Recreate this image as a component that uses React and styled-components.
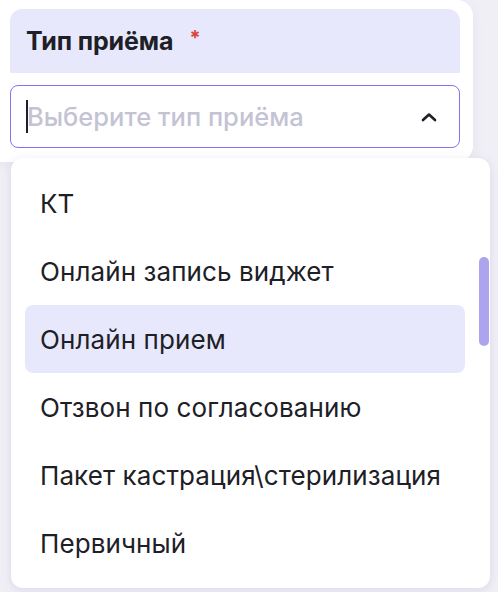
import React from "react";
import styled, { createGlobalStyle } from "styled-components";

const Global = createGlobalStyle`
  html, body { margin: 0; padding: 0; }
  body {
    background: #f0eff6;
    font-family: Inter, "Noto Sans", sans-serif;
    color: #1d2026;
    width: 498px;
    height: 592px;
    overflow: hidden;
  }
`;

const Page = styled.div`
  position: relative;
  width: 498px;
  height: 592px;
  overflow: hidden;
`;

const Card = styled.div`
  width: 473px;
  box-sizing: border-box;
  background: #ffffff;
  border-radius: 0 16px 16px 0;
  padding: 9px 13px 14px 10px;
  display: flex;
  flex-direction: column;
  gap: 12px;
  box-shadow: 0 4px 12px rgba(120, 115, 170, 0.08);
`;

const Label = styled.div`
  height: 64px;
  box-sizing: border-box;
  background: #e8e8fc;
  border-radius: 12px 12px 0 0;
  padding: 0 0 0 16px;
  display: flex;
  align-items: center;
  gap: 16px;
  font-weight: 700;
  font-size: 25px;
  letter-spacing: -0.1px;
`;

const Asterisk = styled.span`
  color: #d9453d;
  font-size: 20px;
  font-weight: 700;
  align-self: flex-start;
  margin-top: 17px;
`;

const Input = styled.div`
  height: 63px;
  box-sizing: border-box;
  border: 1px solid #8b6ff0;
  border-radius: 8px;
  background: #fff;
  display: flex;
  align-items: center;
  padding: 0 22px 0 15px;
`;

const Caret = styled.span`
  width: 2px;
  height: 33px;
  background: #1d2026;
  margin-right: -1px;
`;

const Placeholder = styled.span`
  flex: 1;
  color: #c4c3d4;
  font-size: 25.5px;
  font-weight: 500;
`;

const Dropdown = styled.div`
  position: absolute;
  top: 158px;
  left: 11px;
  width: 479px;
  height: 430px;
  box-sizing: border-box;
  background: #fff;
  border-radius: 12px;
  box-shadow: 0 2px 10px rgba(110, 105, 160, 0.16);
  padding: 11px 25px 11px 14px;
  display: flex;
  flex-direction: column;
`;

const Item = styled.div`
  height: 68px;
  flex-shrink: 0;
  display: flex;
  align-items: center;
  padding-left: 15px;
  border-radius: 8px;
  font-size: 26px;
  font-weight: 400;
  letter-spacing: 0.1px;
  white-space: nowrap;
  background: ${(p) => (p.$active ? "#e8e8fc" : "transparent")};
`;

const Thumb = styled.div`
  position: absolute;
  top: 99px;
  right: 1px;
  width: 10px;
  height: 89px;
  border-radius: 5px;
  background: #aca4ee;
`;

const items = [
  "КТ",
  "Онлайн запись виджет",
  "Онлайн прием",
  "Отзвон по согласованию",
  "Пакет кастрация\\стерилизация",
  "Первичный",
];

export default function App() {
  return (
    <Page>
      <Global />
      <Card>
        <Label>
          Тип приёма
          <Asterisk>*</Asterisk>
        </Label>
        <Input>
          <Caret />
          <Placeholder>Выберите тип приёма</Placeholder>
          <svg width="16" height="10" viewBox="0 0 16 10" fill="none">
            <path d="M2 8 L8 2.5 L14 8" stroke="#1d2026" strokeWidth="2.6" strokeLinecap="round" strokeLinejoin="round" />
          </svg>
        </Input>
      </Card>
      <Dropdown>
        {items.map((t, i) => (
          <Item key={t} $active={i === 2}>
            {t}
          </Item>
        ))}
        <Thumb />
      </Dropdown>
    </Page>
  );
}
